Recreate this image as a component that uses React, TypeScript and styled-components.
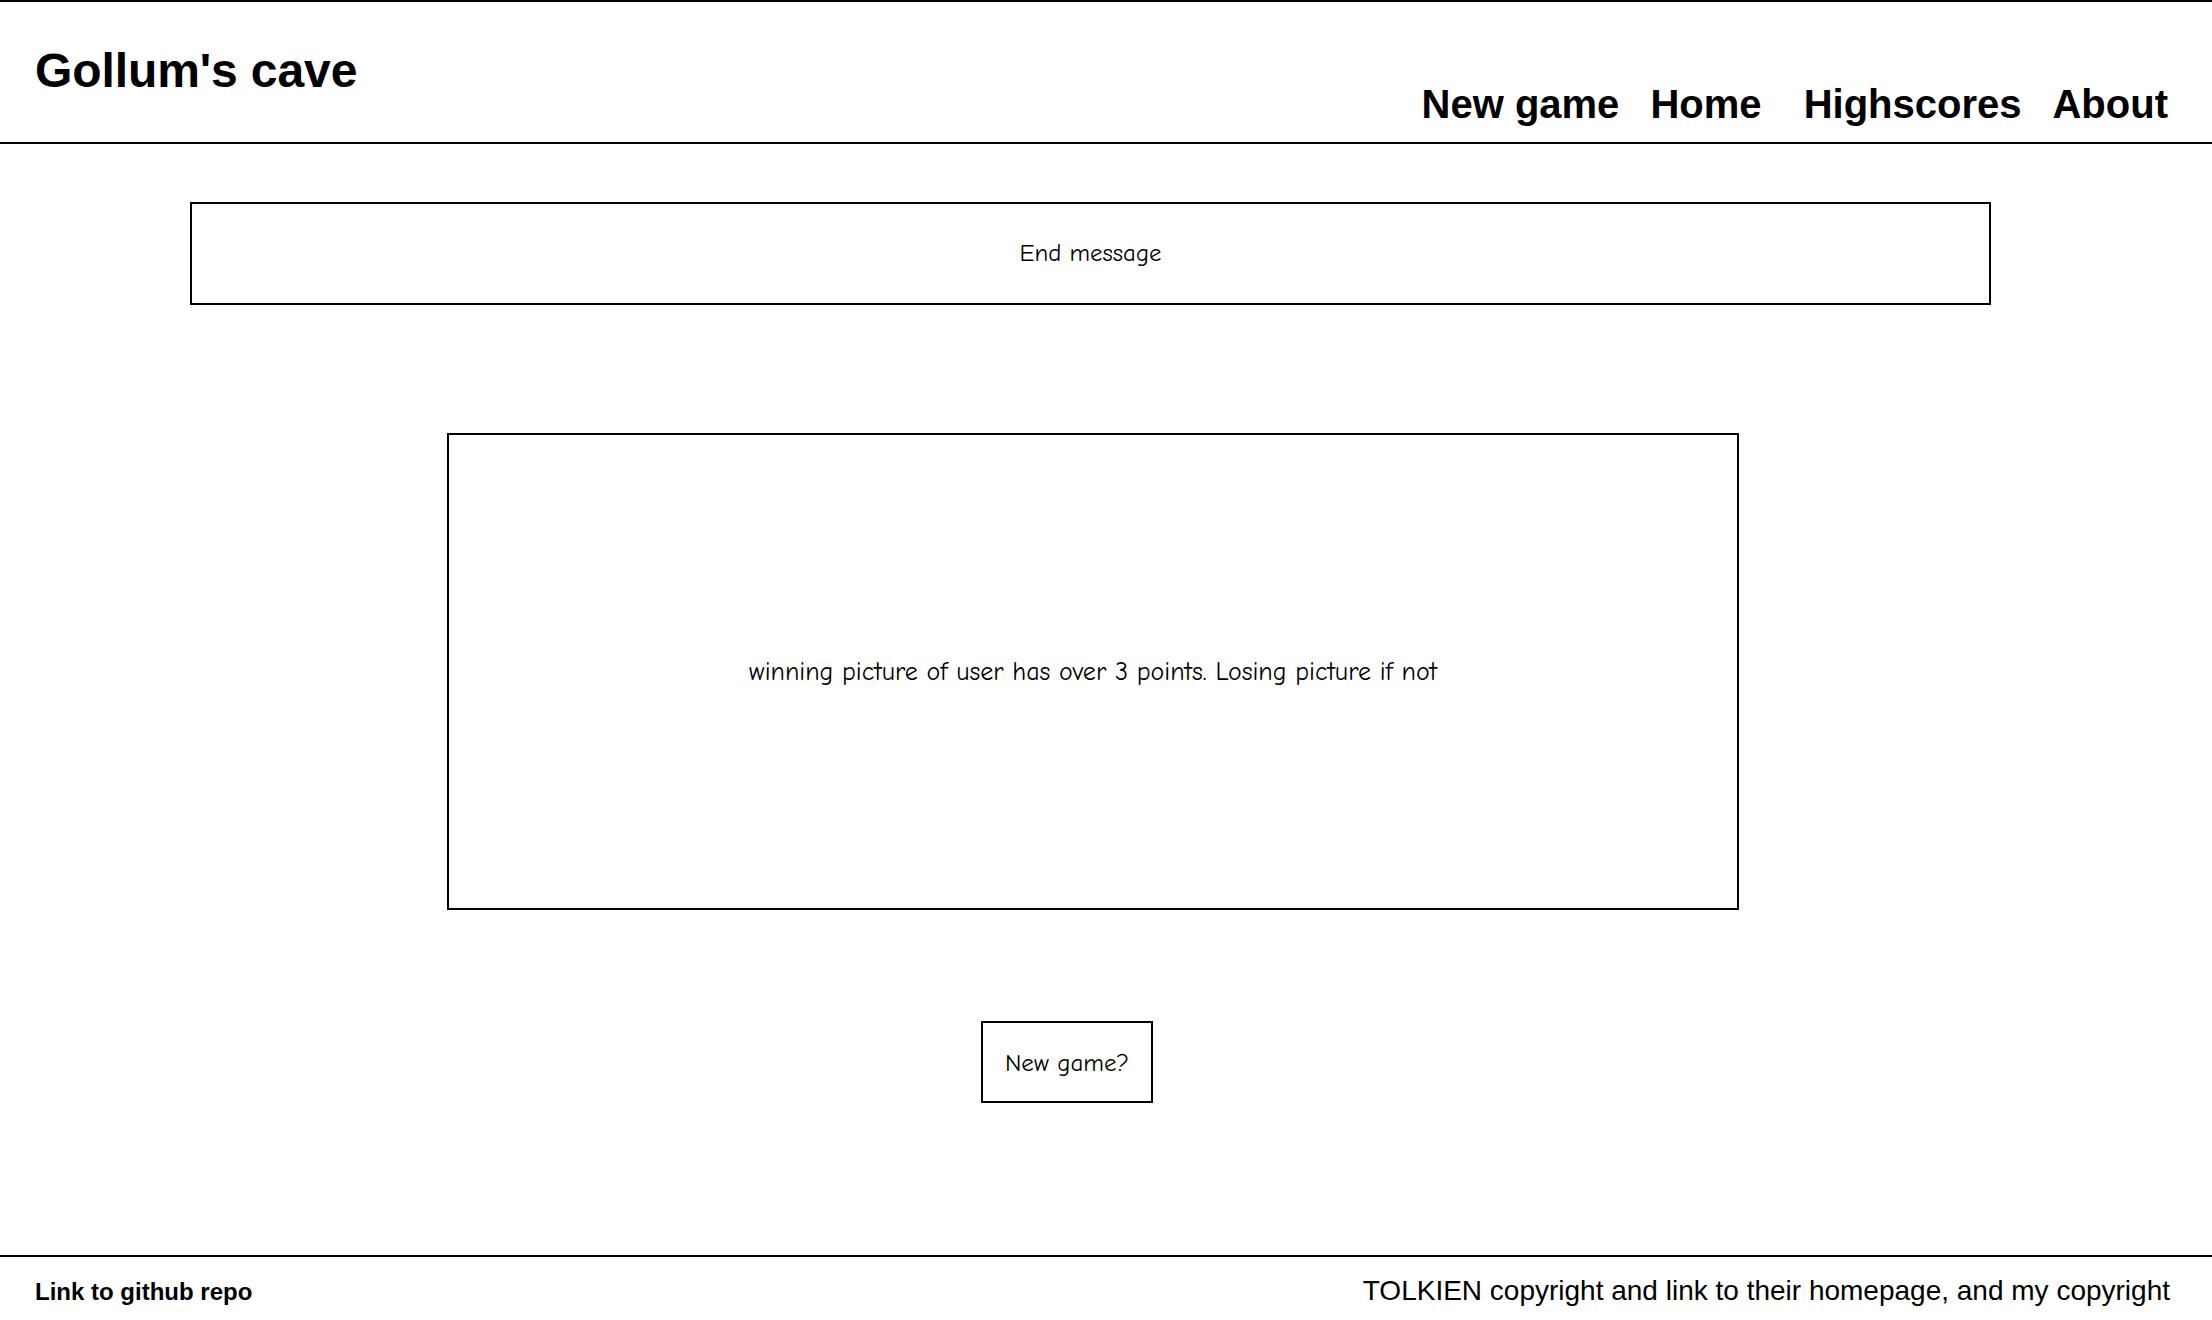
import React from "react";
import styled, { createGlobalStyle } from "styled-components";

const GlobalStyle = createGlobalStyle`
  html, body {
    margin: 0;
    padding: 0;
    background: #ffffff;
  }
  body {
    font-family: "Liberation Sans", Arial, sans-serif;
    color: #000;
  }
  * { box-sizing: border-box; }
`;

const Page = styled.div`
  min-height: 100vh;
  display: flex;
  flex-direction: column;
  border-top: 2px solid #000;
`;

const Header = styled.header`
  height: 142px;
  display: flex;
  justify-content: space-between;
  align-items: flex-start;
  border-bottom: 2px solid #000;
  padding: 0 44px 0 35px;
`;

const Title = styled.h1`
  margin: 0;
  padding-top: 45px;
  font-family: "Liberation Sans", Arial, sans-serif;
  font-weight: 700;
  font-size: 48px;
  line-height: 1;
  letter-spacing: -0.1px;
`;

const Nav = styled.nav`
  display: flex;
  gap: 31px;
  padding-top: 82px;
`;

const NavLink = styled.a`
  font-family: "Liberation Sans", Arial, sans-serif;
  font-weight: 700;
  font-size: 40px;
  line-height: 1;
  color: #000;
  text-decoration: none;
  white-space: pre;
`;

const Main = styled.main`
  flex: 1;
  display: flex;
  flex-direction: column;
  align-items: flex-start;
`;

const SketchBox = styled.div<{ $left: number; $top: number; $width: number; $height: number; $size: number }>`
  margin-left: ${(p) => p.$left}px;
  margin-top: ${(p) => p.$top}px;
  width: ${(p) => p.$width}px;
  height: ${(p) => p.$height}px;
  border: 2px solid #000;
  display: flex;
  align-items: center;
  justify-content: center;
  font-family: "Comic Sans MS", "Comic Neue", "Noto Sans", sans-serif;
  font-size: ${(p) => p.$size}px;
  line-height: 1;
  color: #000;
`;

const SketchButton = styled.button`
  margin-left: 981px;
  margin-top: 111px;
  width: 172px;
  height: 82px;
  border: 2px solid #000;
  background: #fff;
  padding: 0;
  display: flex;
  align-items: center;
  justify-content: center;
  font-family: "Comic Sans MS", "Comic Neue", "Noto Sans", sans-serif;
  font-size: 25px;
  line-height: 1;
  color: #000;
  cursor: pointer;
`;

const Footer = styled.footer`
  height: 65px;
  border-top: 2px solid #000;
  display: flex;
  justify-content: space-between;
  align-items: baseline;
  padding: 18px 42px 0 35px;
`;

const RepoLink = styled.a`
  font-family: "Liberation Sans", Arial, sans-serif;
  font-weight: 700;
  font-size: 24px;
  color: #000;
  text-decoration: none;
`;

const Copyright = styled.span`
  font-family: "Liberation Sans", Arial, sans-serif;
  font-size: 28px;
  color: #000;
`;

export default function App() {
  return (
    <>
      <GlobalStyle />
      <Page>
        <Header>
          <Title>Gollum's cave</Title>
          <Nav>
            <NavLink href="#">New game</NavLink>
            <NavLink href="#">{"Home\u00a0"}</NavLink>
            <NavLink href="#">Highscores</NavLink>
            <NavLink href="#">About</NavLink>
          </Nav>
        </Header>
        <Main>
          <SketchBox $left={190} $top={58} $width={1801} $height={103} $size={24.8}>
            End message
          </SketchBox>
          <SketchBox $left={447} $top={128} $width={1292} $height={477} $size={26}>
            winning picture of user has over 3 points. Losing picture if not
          </SketchBox>
          <SketchButton>New game?</SketchButton>
        </Main>
        <Footer>
          <RepoLink href="#">Link to github repo</RepoLink>
          <Copyright>TOLKIEN copyright and link to their homepage, and my copyright</Copyright>
        </Footer>
      </Page>
    </>
  );
}
